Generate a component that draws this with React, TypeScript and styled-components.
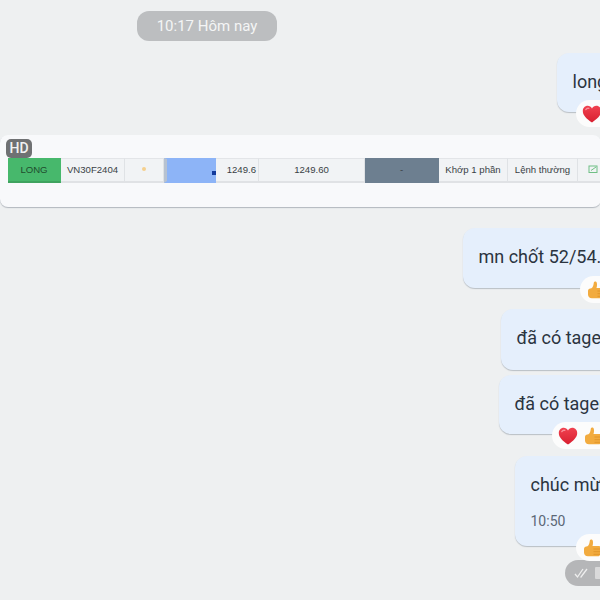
import styled, { createGlobalStyle } from "styled-components";

const GlobalStyle = createGlobalStyle`
  html, body {
    margin: 0;
    padding: 0;
    width: 600px;
    height: 600px;
    overflow: hidden;
    background: #eef0f1;
  }
  * { box-sizing: border-box; }
`;

const Heart = () => (
  <svg width="20" height="20" viewBox="0 0 20 20">
    <defs>
      <linearGradient id="heartFill" x1="0" y1="0" x2="0" y2="1">
        <stop offset="0" stopColor="#f0414f" />
        <stop offset="1" stopColor="#d81f30" />
      </linearGradient>
    </defs>
    <path
      d="M10 18.500C4.600 14.600 0.800 11.400 0.800 6.900 0.800 3.900 3.100 1.800 5.700 1.800 7.500 1.800 9.100 2.800 10 4.400 10.900 2.800 12.500 1.800 14.300 1.800 16.900 1.800 19.200 3.900 19.200 6.900 19.200 11.400 15.400 14.600 10 18.500Z"
      fill="url(#heartFill)"
    />
    <path d="M3.800 5.600C4.600 4.400 5.800 4 6.900 4.400" stroke="#f98e98" strokeWidth="1.300" fill="none" strokeLinecap="round" />
  </svg>
);

const Thumb = () => (
  <svg width="20" height="20" viewBox="0 0 20 20">
    <path
      d="M2 11C2 9.600 3 8.700 4.300 8.500 6 8.200 7 6.800 7.400 4.900L7.900 2.300C8.100 1.200 10.400 1.100 10.800 2.800 11.200 4.400 11 6.300 10.500 8H16.600C18 8 18.900 9 18.700 10.300L18.200 16C18 17.300 17.100 18.300 15.700 18.300H6C3.600 18.300 2 16.800 2 14.600Z"
      fill="#f2ab3f"
    />
    <path d="M11.500 11H18.500M11.500 13.700H18.300M11.500 16.300H18" stroke="#dc9027" strokeWidth="0.800" fill="none" />
  </svg>
);

const Page = styled.div`
  width: 600px;
  height: 600px;
  overflow: hidden;
  display: flex;
  flex-direction: column;
  align-items: flex-start;
  padding-top: 11px;
  background: #eef0f1;
  font-family: Roboto, "Noto Sans", sans-serif;
  color: #2b3440;
`;

const DatePill = styled.div`
  margin-left: 137px;
  width: 140px;
  height: 30px;
  border-radius: 12px;
  background: #bcbec0;
  color: #f4f5f5;
  font-size: 15px;
  line-height: 30px;
  text-align: center;
`;

const Bubble = styled.div<{ $left: number; $top: number; $height: number }>`
  position: relative;
  flex: none;
  margin-left: ${(p) => p.$left}px;
  margin-top: ${(p) => p.$top}px;
  width: 200px;
  height: ${(p) => p.$height}px;
  padding: 17px 0 0 15.5px;
  border-radius: 12px;
  background: #e5effc;
  box-shadow: 0 1px 1px rgba(90, 100, 115, 0.35);
  font-size: 18px;
  line-height: 24px;
  white-space: nowrap;
`;

const Stamp = styled.div`
  margin-top: 15px;
  font-size: 14px;
  line-height: 18px;
  color: #5b6776;
`;

const Reaction = styled.div<{ $left: number }>`
  position: absolute;
  left: ${(p) => p.$left}px;
  bottom: -15px;
  display: flex;
  align-items: center;
  gap: 5px;
  width: 100px;
  height: 27px;
  padding-left: 6px;
  border-radius: 14px;
  background: #fcfcfc;
`;

const ImageCard = styled.div`
  flex: none;
  position: relative;
  margin-top: 23px;
  width: 601px;
  height: 72px;
  padding-top: 23px;
  border-radius: 8px;
  background: #f8f9fb;
  box-shadow: 0 1px 1px rgba(90, 100, 115, 0.4);
`;

const HdBadge = styled.div`
  position: absolute;
  top: 4px;
  left: 6px;
  width: 26px;
  height: 19px;
  border-radius: 5px;
  background: #6f7173;
  color: #f2f2f2;
  font-size: 14px;
  font-weight: 500;
  line-height: 19px;
  text-align: center;
`;

const OrderRow = styled.div`
  display: flex;
  margin-left: 8px;
  height: 25px;
  font-family: "Liberation Sans", Arial, sans-serif;
  font-size: 9.6px;
  color: #3a3f45;
`;

const Cell = styled.div<{ $w: number; $bg?: string; $end?: boolean }>`
  flex: none;
  width: ${(p) => p.$w}px;
  display: flex;
  align-items: center;
  justify-content: ${(p) => (p.$end ? "flex-end" : "center")};
  padding: 0 ${(p) => (p.$end ? "2px" : "0")} 2px 0;
  background: ${(p) => p.$bg ?? "#f1f3f5"};
  border-top: 1px solid #e3e5e8;
  border-bottom: 2px solid #e0e2e5;
  border-right: 1px solid #dfe2e5;
  white-space: nowrap;
`;

const SideCell = styled(Cell)`
  border-color: ${(p) => p.$bg};
`;

const GreenCell = styled(SideCell)`
  border-bottom-color: #3fa35f;
  color: #1f4d2e;
`;

const BlueCell = styled(SideCell)`
  position: relative;
  border-left: 3px solid #b7c2d1;
`;

const BlueMark = styled.span`
  position: absolute;
  right: -1px;
  bottom: 6px;
  width: 4px;
  height: 4px;
  background: #123a9c;
`;

const Dot = styled.span`
  width: 4px;
  height: 4px;
  border-radius: 50%;
  background: #f5d08e;
`;

const ReadPill = styled.div`
  flex: none;
  display: flex;
  align-items: center;
  gap: 5px;
  margin: 14px 0 0 565px;
  width: 60px;
  height: 26px;
  padding-left: 9px;
  border-radius: 13px;
  background: #b5b6b8;
`;

const FileGlyph = styled.span`
  width: 8px;
  height: 12px;
  border-radius: 1px;
  background: #d9d9da;
`;

const App = () => {
  return (
    <>
      <GlobalStyle />
      <Page>
        <DatePill>10:17 Hôm nay</DatePill>

        <Bubble $left={557} $top={12} $height={59}>
          long
          <Reaction $left={19}>
            <Heart />
          </Reaction>
        </Bubble>

        <ImageCard>
          <HdBadge>HD</HdBadge>
          <OrderRow>
            <GreenCell $w={53} $bg="#47b86c">LONG</GreenCell>
            <Cell $w={64}>VN30F2404</Cell>
            <Cell $w={39}><Dot /></Cell>
            <BlueCell $w={52} $bg="#8db4f7"><BlueMark /></BlueCell>
            <Cell $w={43} $end>1249.6</Cell>
            <Cell $w={106}>1249.60</Cell>
            <SideCell $w={74} $bg="#6d7f90">-</SideCell>
            <Cell $w={69}>Khớp 1 phần</Cell>
            <Cell $w={70}>Lệnh thường</Cell>
            <Cell $w={30}>
              <svg width="10" height="10" viewBox="0 0 10 10">
                <rect x="1" y="2" width="8" height="6.500" fill="none" stroke="#6fbf85" strokeWidth="1" />
                <path d="M3 6.500 8 3" stroke="#6fbf85" strokeWidth="1" />
              </svg>
            </Cell>
          </OrderRow>
        </ImageCard>

        <Bubble $left={463} $top={21} $height={60}>
          mn chốt 52/54.5
          <Reaction $left={117}>
            <Thumb />
          </Reaction>
        </Bubble>

        <Bubble $left={501} $top={21} $height={61}>
          đã có tagert
        </Bubble>

        <Bubble $left={499} $top={5} $height={59}>
          đã có tagert
          <Reaction $left={53}>
            <Heart />
            <Thumb />
          </Reaction>
        </Bubble>

        <Bubble $left={515} $top={22} $height={90}>
          chúc mừng
          <Stamp>10:50</Stamp>
          <Reaction $left={61}>
            <Thumb />
          </Reaction>
        </Bubble>

        <ReadPill>
          <svg width="16" height="12" viewBox="0 0 16 12">
            <path d="M1 7 3.500 10 9 2M6.500 9.500 7 10 13 2" stroke="#eeeeee" strokeWidth="1.300" fill="none" />
          </svg>
          <FileGlyph />
        </ReadPill>
      </Page>
    </>
  );
};

export default App;
